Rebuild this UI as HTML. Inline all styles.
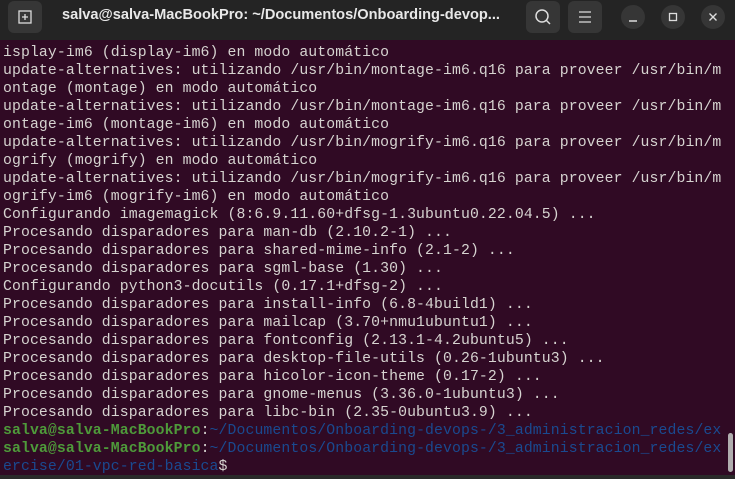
<!DOCTYPE html>
<html><head><style>
html,body{margin:0;padding:0;width:735px;height:479px;overflow:hidden;background:#300a24;}
.tb{position:absolute;left:0;top:0;width:735px;height:40px;background:#242424;}
.btn{position:absolute;top:1px;width:34px;height:32px;background:#363636;border-radius:6px;}
.circ{position:absolute;top:5px;width:24px;height:24px;border-radius:50%;background:#363636;}
.title{position:absolute;left:62px;top:7px;font:bold 14.6px "Liberation Sans",sans-serif;color:#e8e8e8;white-space:nowrap;letter-spacing:0px;}
pre{position:absolute;left:3px;top:44px;margin:0;font:14.8px/18px "Liberation Mono",monospace;color:#d6d3d0;white-space:pre;letter-spacing:0.1px;}
.g{color:#4e9a3a;font-weight:bold}.b{color:#1a4a90}
.sb{position:absolute;left:728px;top:433px;width:5px;height:39px;background:#b0adae;border-radius:3px;}
.bot{position:absolute;left:0;top:475px;width:735px;height:4px;background:#2a2a2a;}
</style></head><body>
<div class="tb">
<div class="btn" style="left:8px;"><svg width="34" height="32"><rect x="11" y="10" width="12" height="12" fill="none" stroke="#ddd" stroke-width="1.3"/><path d="M17 13v6M14 16h6" stroke="#ddd" stroke-width="1.3"/></svg></div>
<div class="title">salva@salva-MacBookPro: ~/Documentos/Onboarding-devop...</div>
<div class="btn" style="left:526px;"><svg width="34" height="32"><circle cx="16" cy="15" r="6" fill="none" stroke="#ddd" stroke-width="1.5"/><path d="M20 19l4 4" stroke="#ddd" stroke-width="1.5"/></svg></div>
<div class="btn" style="left:568px;"><svg width="34" height="32"><path d="M11 11h12M11 16h12M11 21h12" stroke="#ddd" stroke-width="1.3"/></svg></div>
<div class="circ" style="left:621px;"><svg width="24" height="24"><path d="M8 16h8" stroke="#ddd" stroke-width="1.5"/></svg></div>
<div class="circ" style="left:661px;"><svg width="24" height="24"><rect x="8.5" y="8.5" width="7" height="7" fill="none" stroke="#ddd" stroke-width="1.3"/></svg></div>
<div class="circ" style="left:701px;"><svg width="24" height="24"><path d="M8.5 8.5l7 7M15.5 8.5l-7 7" stroke="#ddd" stroke-width="1.4"/></svg></div>
</div>
<pre>isplay-im6 (display-im6) en modo automático
update-alternatives: utilizando /usr/bin/montage-im6.q16 para proveer /usr/bin/m
ontage (montage) en modo automático
update-alternatives: utilizando /usr/bin/montage-im6.q16 para proveer /usr/bin/m
ontage-im6 (montage-im6) en modo automático
update-alternatives: utilizando /usr/bin/mogrify-im6.q16 para proveer /usr/bin/m
ogrify (mogrify) en modo automático
update-alternatives: utilizando /usr/bin/mogrify-im6.q16 para proveer /usr/bin/m
ogrify-im6 (mogrify-im6) en modo automático
Configurando imagemagick (8:6.9.11.60+dfsg-1.3ubuntu0.22.04.5) ...
Procesando disparadores para man-db (2.10.2-1) ...
Procesando disparadores para shared-mime-info (2.1-2) ...
Procesando disparadores para sgml-base (1.30) ...
Configurando python3-docutils (0.17.1+dfsg-2) ...
Procesando disparadores para install-info (6.8-4build1) ...
Procesando disparadores para mailcap (3.70+nmu1ubuntu1) ...
Procesando disparadores para fontconfig (2.13.1-4.2ubuntu5) ...
Procesando disparadores para desktop-file-utils (0.26-1ubuntu3) ...
Procesando disparadores para hicolor-icon-theme (0.17-2) ...
Procesando disparadores para gnome-menus (3.36.0-1ubuntu3) ...
Procesando disparadores para libc-bin (2.35-0ubuntu3.9) ...
<span class="g">salva@salva-MacBookPro</span>:<span class="b">~/Documentos/Onboarding-devops-/3_administracion_redes/ex</span>
<span class="g">salva@salva-MacBookPro</span>:<span class="b">~/Documentos/Onboarding-devops-/3_administracion_redes/ex
ercise/01-vpc-red-basica</span>$</pre>
<div class="sb"></div>
<div class="bot"></div>
</body></html>
